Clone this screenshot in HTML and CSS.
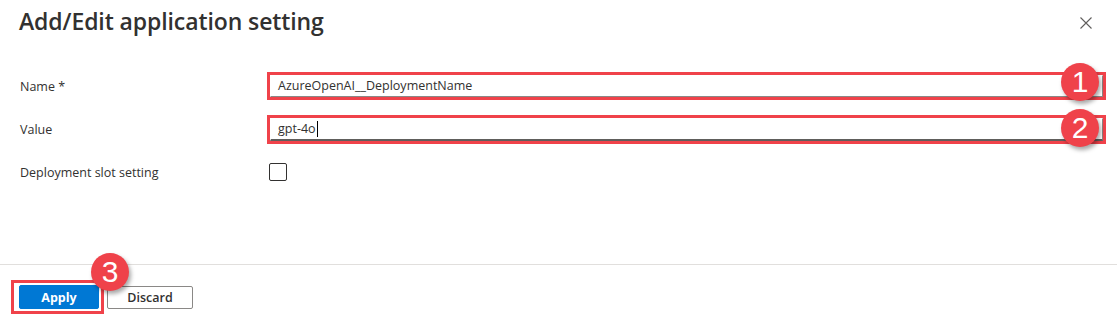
FILE: index.html
```html
<!DOCTYPE html>
<html lang="en">
<head>
<meta charset="utf-8">
<title>Add/Edit application setting</title>
<link rel="stylesheet" href="styles.css">
</head>
<body>
<div class="panel">
  <header class="head">
    <h1 class="title">Add/Edit application setting</h1>
    <button class="close" aria-label="Close">
      <svg width="12" height="12" viewBox="0 0 12 12"><path d="M0.5 0.5 L11.5 11.5 M11.5 0.5 L0.5 11.5" stroke="#605e5c" stroke-width="1.1" fill="none"/></svg>
    </button>
  </header>
  <div class="form">
    <div class="row">
      <label class="label">Name *</label>
      <div class="field hl"><div class="input">AzureOpenAI__DeploymentName</div></div>
    </div>
    <div class="row">
      <label class="label">Value</label>
      <div class="field hl"><div class="input focused">gpt-4o<span class="caret"></span></div></div>
    </div>
    <div class="row">
      <label class="label">Deployment slot setting</label>
      <div class="check-wrap"><span class="check"></span></div>
    </div>
  </div>
  <footer class="foot">
    <div class="hl-btn"><button class="btn primary">Apply</button></div>
    <button class="btn secondary">Discard</button>
  </footer>
  <span class="badge b1">1</span>
  <span class="badge b2">2</span>
  <span class="badge b3">3</span>
</div>
</body>
</html>
```
FILE: styles.css
```css
html, body {
  margin: 0;
  padding: 0;
  background: #ffffff;
}
body {
  font-family: "Open Sans", "Noto Sans", "Liberation Sans", sans-serif;
  color: #323130;
  width: 1117px;
  height: 321px;
  overflow: hidden;
}
.panel {
  position: relative;
  width: 1117px;
  height: 321px;
  display: flex;
  flex-direction: column;
}
.head {
  height: 60px;
  display: flex;
  align-items: flex-start;
  justify-content: space-between;
  padding: 0 24px 0 19px;
}
.title {
  margin: 5px 0 0 0;
  font-size: 23px;
  font-weight: 600;
  letter-spacing: -0.1px;
  color: #323130;
  line-height: 32px;
}
.close {
  margin-top: 16px;
  width: 14px;
  height: 14px;
  padding: 0;
  border: 0;
  background: transparent;
  display: flex;
  align-items: center;
  justify-content: center;
}
.form {
  display: flex;
  flex-direction: column;
  gap: 19px;
  padding-top: 14px;
}
.row {
  display: flex;
  align-items: center;
  height: 24px;
}
.label {
  width: 250px;
  padding-left: 20px;
  font-size: 12.5px;
  color: #323130;
}
.field {
  width: 833px;
}
.field.hl {
  outline: 3px solid #f0424a;
  outline-offset: 0px;
}
.input {
  height: 22px;
  box-sizing: border-box;
  border: 1px solid #8a8886;
  border-top-color: #ffffff;
  border-left-color: #ffffff;
  padding: 0 7px;
  font-size: 12.5px;
  line-height: 20px;
  color: #323130;
  display: flex;
  align-items: center;
}
.input.focused {
  border-bottom: 2px solid #605e5c;
  height: 23px;
}
.caret {
  display: inline-block;
  width: 1px;
  height: 16px;
  background: #000;
  margin-left: 1px;
}
.check-wrap {
  margin-left: -1px;
  display: flex;
}
.check {
  width: 18px;
  height: 18px;
  box-sizing: border-box;
  border: 1px solid #323130;
  border-radius: 2px;
}
.foot {
  margin-top: auto;
  height: 57px;
  border-top: 1px solid #e1dfdd;
  display: flex;
  align-items: flex-start;
  padding: 20px 0 0 16px;
  gap: 8px;
  box-sizing: border-box;
}
.hl-btn {
  outline: 3px solid #f0424a;
  outline-offset: 2px;
  display: flex;
}
.btn {
  height: 24px;
  box-sizing: border-box;
  font-family: inherit;
  font-size: 12.5px;
  font-weight: 600;
  border-radius: 2px;
  padding: 0;
  cursor: pointer;
}
.primary {
  width: 80px;
  margin-left: 3px;
  background: #0078d4;
  border: 1px solid #0078d4;
  color: #ffffff;
  font-weight: 700;
}
.secondary {
  width: 86px;
  height: 23px;
  margin-top: 1px;
  background: #ffffff;
  border: 1px solid #8a8886;
  color: #323130;
}
.badge {
  position: absolute;
  width: 38px;
  height: 38px;
  border-radius: 50%;
  background: #ef424a;
  color: #ffffff;
  font-family: "Liberation Sans", Arial, sans-serif;
  font-size: 30px;
  line-height: 38px;
  text-align: center;
  box-shadow: 2px 3px 4px rgba(0, 0, 0, 0.35);
}
.b1 { left: 1061px; top: 63px; }
.b2 { left: 1061px; top: 109px; }
.b3 { left: 91px; top: 253px; }
```
